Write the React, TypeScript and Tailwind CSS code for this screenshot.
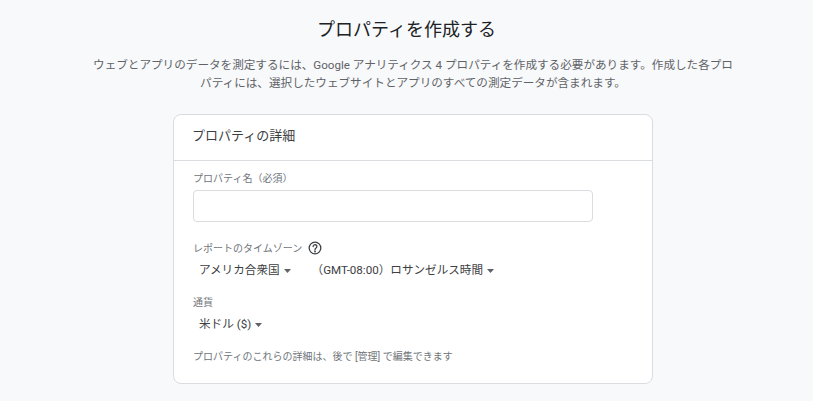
const Caret = () => (
  <svg width="7" height="4" viewBox="0 0 7 4" className="ml-[4px]">
    <path d="M0 0h7L3.5 4z" fill="#5f6368" />
  </svg>
);

const HelpIcon = () => (
  <svg width="14" height="14" viewBox="0 0 24 24" fill="none" stroke="#3c4043" strokeWidth="2.2">
    <circle cx="12" cy="12" r="10" />
    <path d="M8.8 9.5a3.2 3.2 0 1 1 5 2.6c-1.2.8-1.8 1.4-1.8 2.9" strokeLinecap="round" />
    <circle cx="12" cy="18" r="0.6" fill="#3c4043" />
  </svg>
);

const Select = ({ label }: { label: string }) => (
  <div className="flex items-center h-6 text-[11.6px] text-[#3c4043]">
    <span>{label}</span>
    <Caret />
  </div>
);

export default function App() {
  return (
    <div className="w-[813px] h-[401px] overflow-hidden bg-[#f8f9fa] pl-[13px] font-['Roboto','Noto_Sans_CJK_JP',sans-serif] flex flex-col items-center">
      <h1 className="mt-[16px] mr-[13px] h-7 leading-7 text-[18px] text-[#202124]">プロパティを作成する</h1>
      <p className="mt-[12px] w-[644px] text-center text-[11.6px] leading-[18px] text-[#5f6368]">
        ウェブとアプリのデータを測定するには、Google アナリティクス 4 プロパティを作成する必要があります。作成した各プロパティには、選択したウェブサイトとアプリのすべての測定データが含まれます。
      </p>
      <section className="mt-[22px] w-[480px] h-[270px] shrink-0 bg-white rounded-lg border border-[#dadce0]">
        <div className="h-[46px] border-b border-[#dadce0] px-[18px] pb-[3px] flex items-center text-[13px] text-[#3c4043]">
          プロパティの詳細
        </div>
        <div className="px-[19px] pt-[10px]">
          <div className="h-4 leading-4 text-[10px] text-[#70757a]">プロパティ名（必須）</div>
          <div className="mt-[3px] w-[400px] h-8 rounded border border-[#dadce0]" />
          <div className="mt-[18px] flex items-center gap-[6px] h-4 text-[10px] text-[#70757a]">
            <span>レポートのタイムゾーン</span>
            <HelpIcon />
          </div>
          <div className="mt-[3px] flex pl-[6px] gap-[21px]">
            <Select label="アメリカ合衆国" />
            <Select label="（GMT-08:00）ロサンゼルス時間" />
          </div>
          <div className="mt-[12px] h-4 leading-4 text-[10px] text-[#70757a]">通貨</div>
          <div className="mt-[2px] pl-[6px]">
            <Select label="米ドル ($)" />
          </div>
          <div className="mt-[12px] h-4 leading-4 text-[10px] text-[#70757a]">プロパティのこれらの詳細は、後で [管理] で編集できます</div>
        </div>
      </section>
    </div>
  );
}
